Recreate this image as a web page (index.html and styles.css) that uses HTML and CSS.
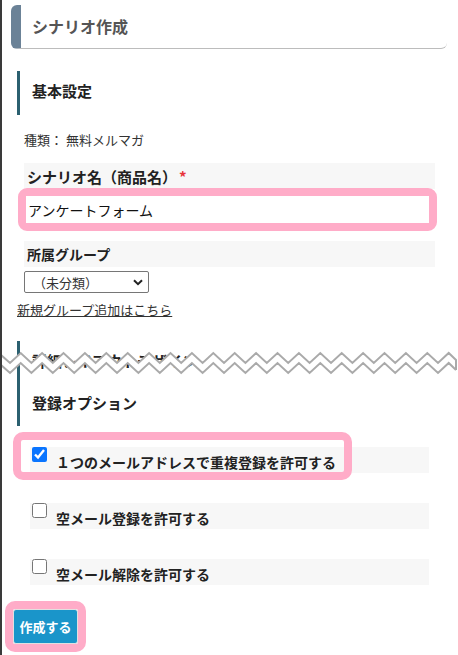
FILE: index.html
```html
<!DOCTYPE html>
<html lang="ja">
<head>
  <meta charset="UTF-8" />
  <meta name="viewport" content="width=device-width, initial-scale=1" />
  <title>シナリオ作成</title>
  <link rel="stylesheet" href="styles.css">
</head>
<body>
  <h1 class="page-title">シナリオ作成</h1>

  <h2 class="sec-head">基本設定</h2>
  <p class="kind">種類： 無料メルマガ</p>

  <div class="field-label">シナリオ名（商品名）<span class="req">*</span></div>
  <div class="hl-input">
    <input type="text" name="name" value="アンケートフォーム" />
  </div>

  <div class="field-label small">所属グループ</div>
  <div class="select-wrap">
    <select name="group">
      <option>（未分類）</option>
    </select>
    <svg class="chev" width="10" height="7" viewBox="0 0 10 7"><path d="M1 1.2 L5 5.2 L9 1.2" fill="none" stroke="#222" stroke-width="2"/></svg>
  </div>
  <a class="add-link" href="#">新規グループ追加はこちら</a>

  <div class="cut">
    <h2 class="sec-head">詳細レイアウトデザイン</h2>
  </div>
  <svg class="tear" width="460" height="28" viewBox="0 0 460 28">
    <polygon fill="#fff" points="0,4 10,13 20.7,3 31.4,13 42.1,3 52.8,13 63.5,3 74.2,13 84.9,3 95.6,13 106.3,3 117,13 127.7,3 138.4,13 149.1,3 159.8,13 170.5,3 181.2,13 191.9,3 202.6,13 213.3,3 224,13 234.7,3 245.4,13 256.1,3 266.8,13 277.5,3 288.2,13 298.9,3 309.6,13 320.3,3 331,13 341.7,3 352.4,13 363.1,3 373.8,13 384.5,3 395.2,13 405.9,3 416.6,13 427.3,3 438,13 448.7,3 456,10 456,20 448.7,13 438,23 427.3,13 416.6,23 405.9,13 395.2,23 384.5,13 373.8,23 363.1,13 352.4,23 341.7,13 331,23 320.3,13 309.6,23 298.9,13 288.2,23 277.5,13 266.8,23 256.1,13 245.4,23 234.7,13 224,23 213.3,13 202.6,23 191.9,13 181.2,23 170.5,13 159.8,23 149.1,13 138.4,23 127.7,13 117,23 106.3,13 95.6,23 84.9,13 74.2,23 63.5,13 52.8,23 42.1,13 31.4,23 20.7,13 10,23 0,14"/>
    <polyline fill="none" stroke="#aaa" stroke-width="2" points="0,4 10,13 20.7,3 31.4,13 42.1,3 52.8,13 63.5,3 74.2,13 84.9,3 95.6,13 106.3,3 117,13 127.7,3 138.4,13 149.1,3 159.8,13 170.5,3 181.2,13 191.9,3 202.6,13 213.3,3 224,13 234.7,3 245.4,13 256.1,3 266.8,13 277.5,3 288.2,13 298.9,3 309.6,13 320.3,3 331,13 341.7,3 352.4,13 363.1,3 373.8,13 384.5,3 395.2,13 405.9,3 416.6,13 427.3,3 438,13 448.7,3 456,10 456,20"/>
    <polyline fill="none" stroke="#aaa" stroke-width="2" points="0,14 10,23 20.7,13 31.4,23 42.1,13 52.8,23 63.5,13 74.2,23 84.9,13 95.6,23 106.3,13 117,23 127.7,13 138.4,23 149.1,13 159.8,23 170.5,13 181.2,23 191.9,13 202.6,23 213.3,13 224,23 234.7,13 245.4,23 256.1,13 266.8,23 277.5,13 288.2,23 298.9,13 309.6,23 320.3,13 331,23 341.7,13 352.4,23 363.1,13 373.8,23 384.5,13 395.2,23 405.9,13 416.6,23 427.3,13 438,23 448.7,13 456,20"/>
  </svg>

  <h2 class="sec-head">登録オプション</h2>

  <label class="opt first">
    <input type="checkbox" checked />
    <span>１つのメールアドレスで重複登録を許可する</span>
    <i class="mark"></i>
  </label>
  <label class="opt">
    <input type="checkbox" />
    <span>空メール登録を許可する</span>
  </label>
  <label class="opt">
    <input type="checkbox" />
    <span>空メール解除を許可する</span>
  </label>

  <div class="btn-hl">
    <button type="submit">作成する</button>
  </div>
</body>
</html>
```

FILE: styles.css
```css
body {
  margin: 0;
  min-height: 655px;
  box-sizing: border-box;
  border-left: 2px solid #3a3a3a;
  position: relative;
  font-family: "Noto Sans CJK JP", "Noto Sans", sans-serif;
  font-size: 13px;
  color: #333;
  background: #fff;
  overflow: hidden;
}
.page-title {
  margin: 5px 0 0 9px;
  width: 436px;
  height: 44px;
  box-sizing: border-box;
  display: flex;
  align-items: center;
  padding: 0 0 2px 11px;
  border-left: 10px solid #6b8297;
  border-bottom: 1px solid #bcbcbc;
  border-radius: 6px;
  font-size: 16px;
  font-weight: bold;
  color: #555;
}
.sec-head {
  margin: 22px 0 0 15px;
  height: 44px;
  box-sizing: border-box;
  display: flex;
  align-items: center;
  padding: 0 0 5px 12px;
  border-left: 3px solid #2b6070;
  font-size: 15px;
  font-weight: bold;
  color: #222;
}
.kind {
  margin: 15px 0 0 22px;
  line-height: 20px;
}
.field-label {
  margin: 13px 0 0 22px;
  width: 411px;
  height: 26px;
  box-sizing: border-box;
  padding: 3px 0 0 3px;
  line-height: 22px;
  background: #f7f7f7;
  font-size: 15px;
  font-weight: bold;
  color: #222;
}
.field-label.small {
  font-size: 14px;
  padding-top: 2px;
}
.req {
  color: #e8333a;
  margin-left: 2px;
}
.hl-input {
  margin: -1px 0 0 16px;
  width: 419px;
  height: 43px;
  box-sizing: border-box;
  border: 8px solid #ffacc8;
  border-radius: 9px;
  background: #fff;
}
.hl-input input {
  width: 100%;
  height: 100%;
  box-sizing: border-box;
  border: none;
  padding: 0 0 0 2px;
  font-family: inherit;
  font-size: 14px;
  color: #111;
  outline: none;
}
.hl-input + .field-label {
  margin-top: 10px;
}
.select-wrap {
  position: relative;
  margin: 4px 0 0 22px;
  width: 125px;
}
.select-wrap select {
  appearance: none;
  width: 125px;
  height: 22px;
  border: 1px solid #767676;
  border-radius: 2px;
  background: #fff;
  padding: 0 0 0 8px;
  font-family: inherit;
  font-size: 13px;
  color: #333;
  display: block;
}
.chev {
  position: absolute;
  right: 6px;
  top: 8px;
}
.add-link {
  display: block;
  margin: 7px 0 0 15px;
  width: max-content;
  line-height: 20px;
  color: #333;
  font-size: 13px;
}
.cut {
  margin-top: 21px;
  height: 42px;
  overflow: hidden;
}
.cut .sec-head {
  margin-top: 0;
}
.tear {
  position: absolute;
  left: -2px;
  top: 350px;
}
.cut + .tear + .sec-head {
  margin-top: 0;
  height: 43px;
}
.opt {
  position: relative;
  display: flex;
  align-items: flex-start;
  margin: 30px 0 0 28px;
  width: 399px;
  height: 26px;
  background: #f7f7f7;
  font-size: 14px;
  font-weight: bold;
  color: #222;
}
.opt.first {
  margin-top: 21px;
}
.opt input {
  width: 15px;
  height: 15px;
  margin: 0 9px 0 2px;
  accent-color: #0a75ff;
}
.opt span {
  margin-top: 5px;
  line-height: 20px;
}
.mark {
  position: absolute;
  top: -15px;
  left: -17px;
  width: 339px;
  height: 48px;
  box-sizing: border-box;
  border: 8px solid #ffacc8;
  border-radius: 10px;
}
.btn-hl {
  display: inline-block;
  margin: 16px 0 0 3px;
  border: 8px solid #ffacc8;
  border-radius: 10px;
  line-height: 0;
}
.btn-hl button {
  width: 65px;
  height: 35px;
  border: 1px solid #e0e0e0;
  border-radius: 3px;
  background: #1a95ca;
  color: #fff;
  font-family: inherit;
  font-size: 13px;
  font-weight: bold;
  padding: 0;
}
```
